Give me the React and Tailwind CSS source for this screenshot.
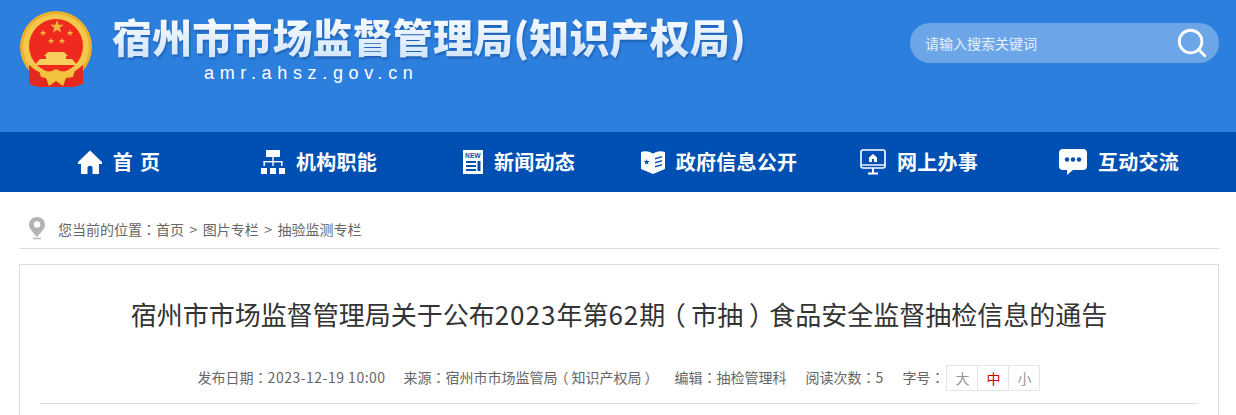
import { Search } from "lucide-react";

const navItems = [
  { label: "首 页", icon: <HomeIcon /> },
  { label: "机构职能", icon: <OrgIcon /> },
  { label: "新闻动态", icon: <NewsIcon /> },
  { label: "政府信息公开", icon: <BookIcon /> },
  { label: "网上办事", icon: <ScreenIcon /> },
  { label: "互动交流", icon: <ChatIcon /> },
];

function HomeIcon() {
  return (
    <svg width="24" height="24" viewBox="0 0 24 24" fill="#fff">
      <path d="M12 0.5 L24 12 V14 H21 V24 H14.5 V17 Q12 14.5 9.5 17 V24 H3 V14 H0 V12 Z" />
    </svg>
  );
}

function OrgIcon() {
  return (
    <svg width="24" height="24" viewBox="0 0 24 24" fill="#fff">
      <rect x="5" y="0" width="14" height="7" />
      <rect x="11.3" y="7" width="1.4" height="5" />
      <rect x="2.5" y="11" width="19" height="1.4" />
      <rect x="2.5" y="11" width="1.4" height="5" />
      <rect x="20.1" y="11" width="1.4" height="5" />
      <rect x="11.3" y="11" width="1.4" height="5" />
      <rect x="0" y="18" width="6" height="6" />
      <rect x="9" y="18" width="6" height="6" />
      <rect x="18" y="18" width="6" height="6" />
    </svg>
  );
}

function NewsIcon() {
  return (
    <svg width="20" height="24" viewBox="0 0 20 24">
      <rect width="20" height="24" fill="#fff" />
      <rect x="3" y="11" width="10" height="2" fill="#0050b3" />
      <rect x="3" y="15" width="10" height="2" fill="#0050b3" />
      <rect x="3" y="19" width="10" height="2" fill="#0050b3" />
      <rect x="14.5" y="11" width="3" height="10" fill="#0050b3" />
      <text x="10" y="8" textAnchor="middle" fontSize="6.5" fontWeight="700" fill="#0050b3" fontFamily="Liberation Sans, sans-serif">NEW</text>
    </svg>
  );
}

function BookIcon() {
  return (
    <svg width="24" height="24" viewBox="0 0 24 24">
      <path d="M0 2 Q6 0 12 3.5 Q18 0 24 2 V19 L12 24 L0 19 Z" fill="#fff" />
      <path d="M3.5 9 L4.4 11 L6.6 11.1 L4.9 12.5 L5.5 14.6 L3.6 13.4 L1.8 14.6 L2.4 12.5 L0.8 11.1 L3 11 Z" fill="#0050b3" transform="translate(2 0)" />
      <path d="M14 8 L21 6 V7.5 L14 9.5 Z M14 12 L21 10 V11.5 L14 13.5 Z M14 16 L21 14 V15.5 L14 17.5 Z" fill="#0050b3" />
    </svg>
  );
}

function ScreenIcon() {
  return (
    <svg width="26" height="26" viewBox="0 0 26 26" fill="none">
      <rect x="1" y="1" width="24" height="18" rx="2" stroke="#fff" strokeWidth="1.6" />
      <path d="M1 16 H25" stroke="#fff" strokeWidth="1.4" />
      <path d="M13 5 L17 8.5 V13 H9 V8.5 Z" fill="#fff" />
      <rect x="12" y="10" width="2" height="3" fill="#0050b3" />
      <path d="M13 19 V24 M8 24.5 H18" stroke="#fff" strokeWidth="2" />
    </svg>
  );
}

function ChatIcon() {
  return (
    <svg width="28" height="26" viewBox="0 0 28 26">
      <path d="M4 0 H24 Q28 0 28 4 V17 Q28 21 24 21 H14 L8 26 V21 H4 Q0 21 0 17 V4 Q0 0 4 0 Z" fill="#fff" />
      <circle cx="8" cy="10.5" r="2.2" fill="#0050b3" />
      <circle cx="14" cy="10.5" r="2.2" fill="#0050b3" />
      <circle cx="20" cy="10.5" r="2.2" fill="#0050b3" />
    </svg>
  );
}

function Star({ x, y, r }) {
  const pts = [];
  for (let i = 0; i < 10; i++) {
    const rad = i % 2 === 0 ? r : r * 0.4;
    const a = (Math.PI / 5) * i - Math.PI / 2;
    pts.push(`${x + rad * Math.cos(a)},${y + rad * Math.sin(a)}`);
  }
  return <polygon points={pts.join(" ")} fill="#f0b93a" />;
}

function Emblem() {
  return (
    <svg width="76" height="78" viewBox="0 0 76 78">
      <circle cx="37" cy="37" r="36" fill="#ecb02e" />
      <circle cx="37" cy="37" r="33" fill="#f4c84a" />
      <circle cx="37" cy="36" r="27" fill="#f0291f" />
      <Star x={38} y={17} r={7} />
      <Star x={24} y={23} r={3.4} />
      <Star x={51} y={23} r={3.4} />
      <Star x={32} y={31} r={3.4} />
      <Star x={43} y={31} r={3.4} />
      {/* gate */}
      <path d="M25 46 L29 42 H45 L49 46 H47 V49 H27 V46 Z" fill="#f7cf5c" />
      <path d="M21 49 H53 L58 55 H16 Z" fill="#f7cf5c" />
      {/* ribbons */}
      <path d="M10 55 Q22 66 37 67 Q52 66 64 55 V74 L55 77 H19 L10 74 Z" fill="#e42a1e" />
      {/* knot */}
      <path d="M20 60 Q30 64 37 59 Q44 64 56 60 L54 67 L47 68 L44 76 L37 71 L30 76 L27 68 L22 67 Z" fill="#f2c13e" />
    </svg>
  );
}

// the reference's full-width punctuation sits mid-cell
function Colon() {
  return <span className="font-['Noto_Sans_CJK_TC',sans-serif]">：</span>;
}

export default function App() {
  return (
    <div className="bg-white h-[415px] overflow-hidden font-['Noto_Sans_CJK_SC',sans-serif]">
      <header className="h-[132px] bg-[#2d7fde]">
        <div className="w-[1200px] ml-[19px] flex justify-between">
          <div className="flex">
            <div className="pt-[10px]">
              <Emblem />
            </div>
            <div className="ml-[17px]">
              <h1 className="mt-[10px] h-[52px] leading-[52px] text-[40px] font-black tracking-[0.12px] whitespace-nowrap bg-gradient-to-b from-white to-[#cfe3fa] bg-clip-text text-transparent [filter:drop-shadow(1px_2px_1px_rgba(10,60,130,0.45))]">
                宿州市市场监督管理局(知识产权局)
              </h1>
              <p className="ml-[92px] text-[18px] leading-[22px] tracking-[5.65px] text-white font-['Liberation_Sans',sans-serif]">
                amr.ahsz.gov.cn
              </p>
            </div>
          </div>
          <div className="mt-[23px] w-[309px] h-[40px] rounded-[20px] bg-[#6ca6e8] flex items-center pl-[15px] pr-[10px] justify-between">
            <span className="text-[14px] text-[#e6f0fc]">请输入搜索关键词</span>
            <Search size={34} strokeWidth={2} className="text-white" />
          </div>
        </div>
      </header>

      <nav className="h-[60px] bg-[#0050b3]">
        <ul className="w-[1200px] ml-[19px] grid grid-cols-6 h-full">
          {navItems.map((item) => (
            <li key={item.label} className="flex items-center justify-center gap-[11px] text-white text-[20px] font-bold tracking-[0.25px] [word-spacing:2px] whitespace-pre">
              {item.icon}
              <span>{item.label}</span>
            </li>
          ))}
        </ul>
      </nav>

      <main className="w-[1200px] ml-[19px]">
        <div className="mt-[26px] h-[31px] border-b border-[#dddddd] flex items-start pl-[9px] text-[14px] text-[#666]">
          <svg width="18" height="23" viewBox="0 0 18 23" className="-mt-[1px]">
            <path d="M9 0 C4 0 1 3.6 1 8 C1 12 6 16 9 20 C12 16 17 12 17 8 C17 3.6 14 0 9 0 Z" fill="#b4b4b4" />
            <circle cx="9" cy="7.5" r="3.2" fill="#fff" />
            <path d="M5 21.5 H13" stroke="#b4b4b4" strokeWidth="1.4" />
          </svg>
          <span className="ml-[12px] leading-[22px] whitespace-pre">
            您当前的位置<Colon />首页<span className="mx-[5.5px]">&gt;</span>图片专栏<span className="mx-[5.5px]">&gt;</span>抽验监测专栏
          </span>
        </div>

        <section className="mt-[15px] h-[200px] border border-[#dddddd] px-[20px]">
          <h2 className="mt-[29px] text-center text-[26px] leading-[40px] text-[#333] font-normal whitespace-nowrap">
            宿州市市场监督管理局关于公布<span className="tracking-[1px]">2023</span>年第<span className="tracking-[1px]">62</span>期<span className="inline-block w-[26px] text-center [font-feature-settings:'palt']">（</span>市抽<span className="inline-block w-[26px] text-center [font-feature-settings:'palt']">）</span>食品安全监督抽检信息的通告
          </h2>
          <div className="mt-[30px] h-[40px] border-b border-[#dddddd] flex justify-center text-[14px] text-[#666] leading-[26px] whitespace-nowrap">
            <span>发布日期<Colon /><span className="tracking-[0.5px]">2023-12-19 10:00</span></span>
            <span className="ml-[18px]">来源<Colon />宿州市市场监管局<span className="inline-block w-[14px] text-center [font-feature-settings:'palt']">（</span>知识产权局<span className="inline-block w-[14px] text-center [font-feature-settings:'palt']">）</span></span>
            <span className="ml-[19px]">编辑<Colon />抽检管理科</span>
            <span className="ml-[19px]">阅读次数<Colon />5</span>
            <span className="ml-[19px] mr-[2px]">字号<Colon /></span>
            <div className="flex mt-[1px] h-[26px] border border-[#e5e5e5]">
              <span className="w-[31px] text-center leading-[24px] text-[#999] border-r border-[#e5e5e5]">大</span>
              <span className="w-[31px] text-center leading-[24px] text-[#c00] border-r border-[#e5e5e5]">中</span>
              <span className="w-[30px] text-center leading-[24px] text-[#999]">小</span>
            </div>
          </div>
        </section>
      </main>
    </div>
  );
}
